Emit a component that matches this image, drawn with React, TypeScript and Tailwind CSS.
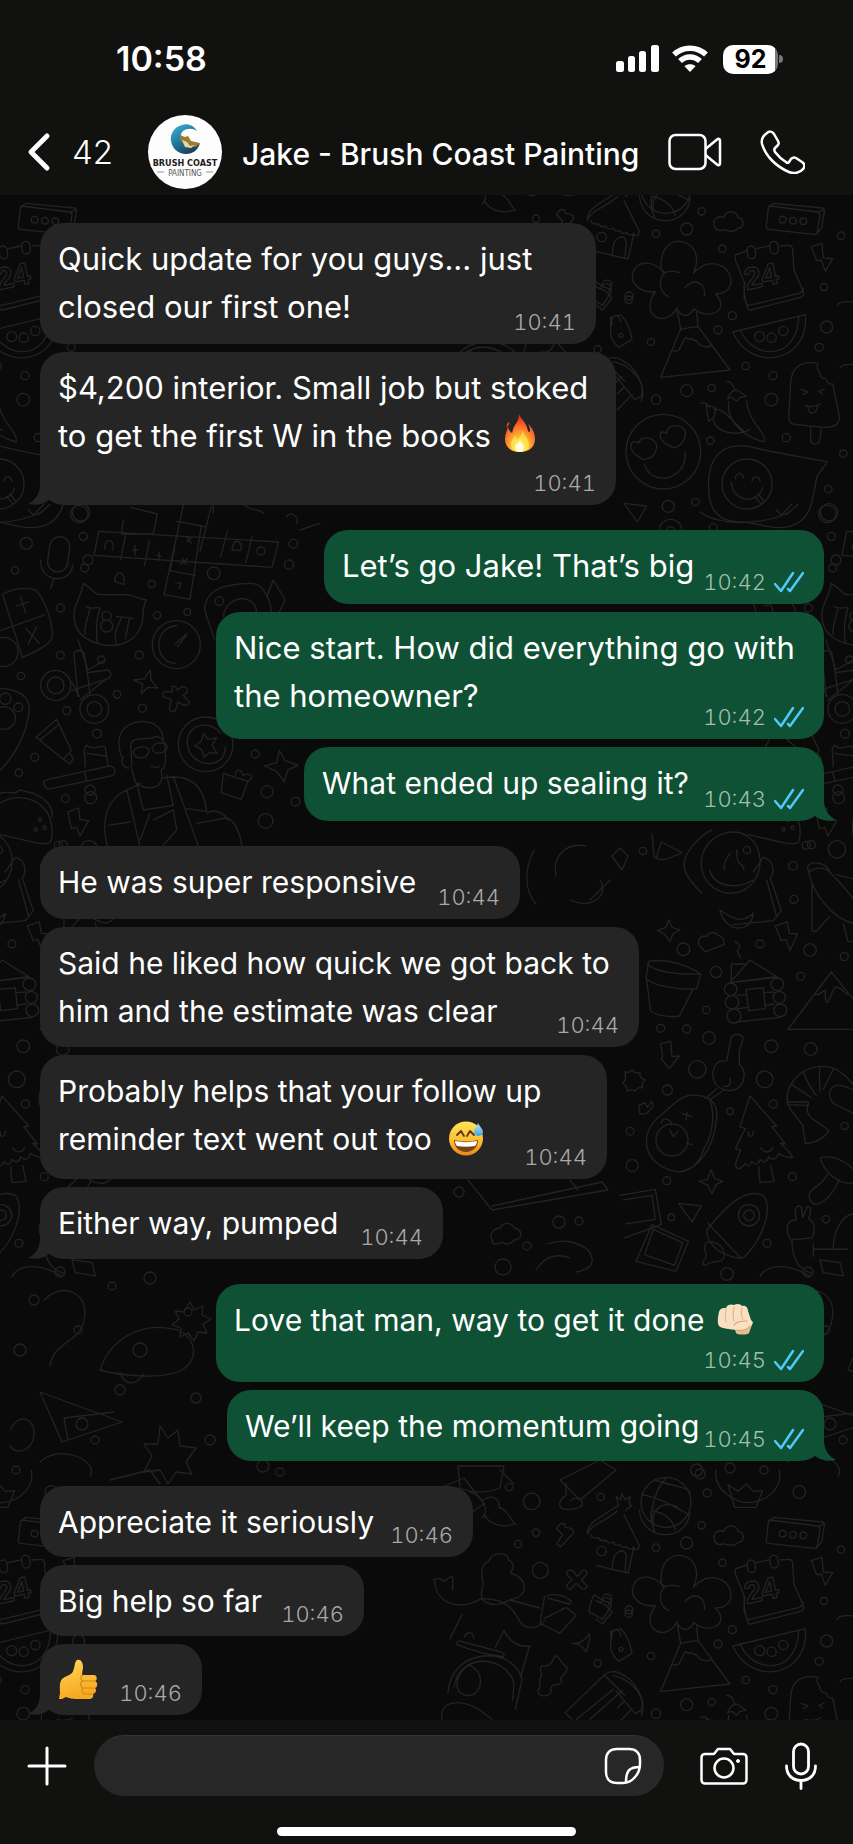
import type { ReactNode } from 'react'
import { clsx } from 'clsx'

type Message = {
  lines: ReactNode[]
  time: string
  size: string
  mine?: boolean
  tail?: boolean
  timeBelow?: boolean
}

function Fire() {
  return (
    <svg viewBox="0 0 32 40" className="ml-1 inline-block h-10 w-8 align-[-6px]" role="img" aria-label="fire">
      <defs>
        <radialGradient id="fire" cx="0.5" cy="0.88" r="0.8">
          <stop offset="0.1" stopColor="#fff56a" />
          <stop offset="0.38" stopColor="#ffb52e" />
          <stop offset="0.7" stopColor="#fb6b2c" />
          <stop offset="1" stopColor="#e2301c" />
        </radialGradient>
      </defs>
      <path fill="url(#fire)" d="M15 1c1 4 8 9 9 17 1 2 2 1 2-1 0-2-1-4-2-6 4 3 7 9 7 15 0 8-6 13-15 13S1 34 1 26c0-5 2-8 3-12 1 3 2 5 4 6 1-3 1-5 3-8 3-4 4-7 4-11Z" />
      <path fill="#ef4a20" d="M5 9c1 2-1 3-2 6-1-2 0-5 2-6Z" />
      <path fill="#ffe94d" d="M18 15c0 6 7 10 7 17 0 4-4 7-9 7s-9-3-9-8c0-4 3-6 4-9 1 2 1 4 2 5 4-3 6-7 5-12Z" opacity="0.75" />
      <path fill="#fffbe0" d="M16 27c1 3 4 4 4 7 0 3-2 5-4 5s-5-2-5-5 4-4 5-7Z" />
    </svg>
  )
}

function SweatSmile() {
  return (
    <svg viewBox="0 0 36 36" className="ml-2 inline-block h-9 w-9 align-[-6px]" role="img" aria-label="grinning face with sweat">
      <defs>
        <linearGradient id="face" x1="0" y1="0" x2="0" y2="1">
          <stop offset="0" stopColor="#ffe45a" />
          <stop offset="0.6" stopColor="#fdbd2c" />
          <stop offset="1" stopColor="#e8851c" />
        </linearGradient>
        <linearGradient id="drop" x1="0" y1="0" x2="0" y2="1">
          <stop offset="0" stopColor="#b9e8fb" />
          <stop offset="1" stopColor="#3fa4e0" />
        </linearGradient>
      </defs>
      <circle cx="18" cy="18.500" r="17" fill="url(#face)" />
      <path d="M9 15l4-4 3 5M19 16l3-5 4 4" fill="none" stroke="#5b3412" strokeWidth="1.800" strokeLinecap="round" strokeLinejoin="round" />
      <path d="M6 20c8 2 16 2 24 0 0 7-5 12-12 12S6 27 6 20Z" fill="#7a4312" />
      <path d="M7 21c7 1.500 15 1.500 22 0 0 2-1 4-2 5-6 1-12 1-18 0-1-1-2-3-2-5Z" fill="#fff" />
      <path d="M30 3c2 4 5 6 5 9 0 2-2 4-4.500 4S26 14 26 12c0-3 3-5 4-9Z" fill="url(#drop)" />
    </svg>
  )
}

function Fist() {
  return (
    <svg viewBox="0 0 37 32" className="ml-1 inline-block h-8 w-[37px] align-[-4px]" role="img" aria-label="oncoming fist">
      <path d="M17 23l2 7c1 2 12 2 13 0l4-11-6-5Z" fill="#e6bd94" />
      <path d="M2 9c1-4 4-4 7-4 1-4 6-4 8-3 3-2 7-1 8 1 4-1 6 2 6 5l3 9c2 2 2 4 0 6-3 4-9 5-14 4-7-1-15-1-18-4-2-3-1-10 0-14Z" fill="#fae0c2" />
      <path d="M9 6c-1 4-1 9 0 13M17 4c-1 5-1 10 0 14M25 5c-1 4-1 8 1 11" fill="none" stroke="#e2b78f" strokeWidth="1.200" strokeLinecap="round" />
      <path d="M17 22c3-4 8-4 13-4M20 27c5 1 10 0 13-4" fill="none" stroke="#d3a57c" strokeWidth="1.200" strokeLinecap="round" />
    </svg>
  )
}

function ThumbsUp() {
  return (
    <svg viewBox="0 0 40 40" className="inline-block size-10 align-[-8px]" role="img" aria-label="thumbs up">
      <defs>
        <linearGradient id="thumb" x1="0" y1="0" x2="0.3" y2="1">
          <stop offset="0" stopColor="#ffd95a" />
          <stop offset="1" stopColor="#f6a821" />
        </linearGradient>
      </defs>
      <path d="M19 1c4-1 6 3 6 7 0 3-1 5-1 8h12c3 0 4 5 1 6 3 1 3 6 0 7 2 2 1 5-2 6 1 3-1 5-4 5H18c-4 0-7-1-10-2l-4 2H1l1-6c0-5-1-10 2-14 3-3 7-3 10-6 3-4 2-11 5-13Z" fill="url(#thumb)" />
      <path d="M25 16c-3 1-3 5 0 6h12M25 22c-3 1-3 6 0 7h11M26 29c-3 1-2 5 0 6h8" fill="none" stroke="#d48a17" strokeWidth="1.200" strokeLinecap="round" />
    </svg>
  )
}

const groups: Message[][] = [
  [
    { lines: ['Quick update for you guys... just', 'closed our first one!'], time: '10:41', size: 'w-[556px] min-h-[121px] text-[31px]' },
    {
      lines: ['$4,200 interior. Small job but stoked', <>to get the first W in the books <Fire /></>],
      time: '10:41',
      size: 'w-[576px] min-h-[153px] text-[31px]',
      tail: true,
      timeBelow: true,
    },
  ],
  [
    { lines: ['Let’s go Jake! That’s big'], time: '10:42', size: 'w-[500px] min-h-[74px] text-[31px]', mine: true },
    { lines: ['Nice start. How did everything go with', 'the homeowner?'], time: '10:42', size: 'w-[608px] min-h-[127px] text-[31px]', mine: true },
    { lines: ['What ended up sealing it?'], time: '10:43', size: 'w-[520px] min-h-[74px] text-[30px]', mine: true, tail: true },
  ],
  [
    { lines: ['He was super responsive'], time: '10:44', size: 'w-[480px] min-h-[73px] text-[30px]' },
    { lines: ['Said he liked how quick we got back to', 'him and the estimate was clear'], time: '10:44', size: 'w-[599px] min-h-[120px] text-[30px]' },
    {
      lines: ['Probably helps that your follow up', <>reminder text went out too <SweatSmile /></>],
      time: '10:44',
      size: 'w-[567px] min-h-[124px] text-[30px]',
    },
    { lines: ['Either way, pumped'], time: '10:44', size: 'w-[403px] min-h-[72px] text-[30px]', tail: true },
  ],
  [
    { lines: [<>Love that man, way to get it done <Fist /></>], time: '10:45', size: 'w-[608px] min-h-[98px] text-[30px]', mine: true, timeBelow: true },
    { lines: ['We’ll keep the momentum going'], time: '10:45', size: 'w-[597px] min-h-[71px] text-[30px]', mine: true, tail: true },
  ],
  [
    { lines: ['Appreciate it seriously'], time: '10:46', size: 'w-[433px] min-h-[71px] text-[30px]' },
    { lines: ['Big help so far'], time: '10:46', size: 'w-[324px] min-h-[71px] text-[30px]' },
    { lines: [<ThumbsUp />], time: '10:46', size: 'w-[162px] min-h-[71px] text-[30px]', tail: true },
  ],
]

function Time({ message }: { message: Message }) {
  return (
    <span className={clsx('flex shrink-0 items-center gap-2 self-end text-[22px] leading-6 font-light tabular-nums', message.mine ? 'text-[#a3bdae]' : 'text-[#a9a9a9]')}>
      <time>{message.time}</time>
      {message.mine && (
        <svg viewBox="0 0 30 24" className="h-6 w-[30px]" fill="none" stroke="#4fc9f7" strokeWidth="2.500" strokeLinecap="round" strokeLinejoin="round" role="img" aria-label="read">
          <path d="M1 14l6 7L19 3M14 19l2 2L29 3" />
        </svg>
      )}
    </span>
  )
}

function Bubble({ message }: { message: Message }) {
  const { lines, size, mine, tail, timeBelow } = message
  const last = lines[lines.length - 1]
  return (
    <li
      className={clsx(
        'relative flex max-w-full flex-col rounded-3xl pt-3 pr-5 pb-[10px] pl-[18px] leading-[48px]',
        mine ? 'self-end bg-[#0e5135]' : 'self-start bg-[#242524]',
        size,
      )}
    >
      {tail && (
        <svg
          viewBox="0 0 28 25"
          className={clsx('absolute bottom-0 h-[25px] w-7', mine ? '-right-3 -scale-x-100 fill-[#0e5135]' : '-left-3 fill-[#242524]')}
        >
          <path d="M12 0v4C12 13 8 20 0 24c8 2 16 0 21-4l6-10Z" />
        </svg>
      )}
      {lines.slice(0, -1).map((line, i) => (
        <p key={i} className="whitespace-nowrap">{line}</p>
      ))}
      {timeBelow ? (
        <>
          <p className="h-12 whitespace-nowrap">{last}</p>
          <div className="flex flex-1 justify-end">
            <Time message={message} />
          </div>
        </>
      ) : (
        <div className="flex flex-1 justify-between">
          <p className="h-12 whitespace-nowrap">{last}</p>
          <Time message={message} />
        </div>
      )}
    </li>
  )
}

const TILE_W = 748
const TILE_H = 1314

function Dots({ at }: { at: number[][] }) {
  return at.map(([cx, cy, r], i) => <circle key={i} cx={cx} cy={cy} r={r} />)
}

// Each sheet is drawn at three times its size, then scaled down into place.
function Doodles() {
  return (
    <g fill="none" stroke="#232321" strokeWidth="4" strokeLinecap="round" strokeLinejoin="round">
      <g transform="translate(580 190) scale(0.3333)">
        <Dots at={[[365, 64, 11], [228, 131, 11], [320, 117, 18], [427, 176, 11], [146, 329, 11], [457, 377, 12], [414, 420, 12], [213, 456, 11], [497, 528, 11], [579, 557, 12], [732, 291, 11], [740, 411, 18], [718, 472, 12], [783, 137, 11], [320, 602, 18], [395, 594, 11], [228, 629, 14], [574, 629, 19], [619, 743, 12], [391, 752, 11], [790, 791, 11], [745, 897, 11], [747, 967, 26], [265, 949, 18], [346, 936, 11], [400, 1013, 12], [272, 1022, 34], [272, 1022, 12]]} />
        <path d="M178 18c10 100 144 95 152 8M214 20c-2 20 2 45 10 62M220 20c40 10 60 30 66 58" />
        <path d="M405 112c-12-24 10-36 26-30 10-24 40-20 42 0 20 2 24 30 0 34-20 16-30 2-46 4-12 4-18 0-22-8Z" />
        <path d="M568 48l145 18q8 2 7 10l-8 50q-2 8-10 7L566 118q-8-2-7-10l6-52q1-8 8-8l8-8 146 14q8 1 6 10l-8 50-16 18M718 66l15-8" />
        <Dots at={[[608, 89, 10], [639, 92, 10], [670, 94, 10]]} />
        <path d="M22 90c10-30 60-40 90-70M132 32l46 92c-2 14-10 16-18 8-8 6-16 4-20-4-10 4-18 2-20-6-12 4-18 0-20-8-14 6-20 2-22-6-12 4-20 0-22-6-14 2-22-2-24-10M50 185l94 22 18-78M97 192c0-60 40-60 42-36l-4 46" />
        <circle cx="65" cy="141" r="14" />
        <path d="M254 248c-90-90-150 60-28 58-50 70 30 110 64 50 20 34 40 20 52 0 50 40 110 0 64-44 80 0 50-110-30-88-20 10-30 18-36 26 50-110-110-140-96-12 2 8 6 10 10 10 14-6 30-6 44 0M254 248c-20 20-16 60 12 72M315 293c30-34 64-10 58 24" />
        <path d="M290 352l12 66c20-4 40-8 52-8l-4-44M302 418l-60 144 208-22-96-130M280 482c24 10 24-30 38-40 6 6 8 10 12 4 8-4 12 12 18 4 10 20 30 24 44 18" />
        <path d="M470 194l32-12M528 176l38-8M600 168l28-2q10 2 10 14l4 60 26 60c6 14 4 18-6 22l-150 38q-8 0-10-10l-10-30 2-40-28-70q-2-14 4-18M494 276c-6 20 0 40 4 60 2 14 10 10 20 8l140-34q10-4 12-14" />
        <rect x="502" y="168" width="24" height="38" rx="12" transform="rotate(-8 514 187)" />
        <rect x="570" y="154" width="24" height="38" rx="12" transform="rotate(-8 582 173)" />
        <text x="500" y="300" transform="rotate(-12 500 300)" className="font-['Liberation_Sans'] text-[92px] font-bold">24</text>
        <path d="M694 170l32-10 4 44 28 2-22 38-12-34-14 2ZM458 426l218-52c14 140-160 180-218 52ZM482 422c40 90 170 90 174-42" />
        <Dots at={[[539, 440, 15], [575, 443, 14], [610, 423, 14]]} />
        <path d="M92 382l30-8c20 20 30 50 34 74l-40 24c-16-14-24-30-24-42ZM96 404c-6-34 24-34 26-8M48 290l30 14 18 20-28 36-20-14M64 294c8-20 36-16 28 8" />
        <circle cx="123" cy="436" r="6" />
        <path d="M100 515c50 10 100 60 84 104l-20 10M108 560l56 68M112 612l20-20M112 660l44-46" />
        <path d="M714 520c-60-10-80 20-82 60l-6 100c0 14 6 22 20 24l90 8c30 0 44-10 42-34l-20-96c-10 2-18-4-20-16-14 0-20-8-18-18-10-8-10-18-6-28ZM692 712v40c6 14 26 12 28-2l4-36M664 598l20 8-14 8M732 598l-16 6 12 8M676 646c14 6 30 4 46-4M684 648c0 34 30 24 28-2" />
        <path d="M440 574c12 0 20 10 24 26M442 626l12-20 16-6 28 18-20 6-8 10-14-12ZM446 634c-8 70 60 110 106 122 10-30-50-60-52-124M362 640c14-4 22 2 26 14M378 646l30 6-6 30-16 12ZM400 690c10 40 70 50 110 28M402 656c40 4 54 40 90 68" />
        <circle cx="250" cy="785" r="112" />
        <path d="M188 808c-60-34-30-66-12-48 6-30 70-16 50 26-6 14-20 22-38 22ZM282 774c-60-24-44-60-22-44 0-34 70-30 54 14-6 16-18 26-32 30ZM194 824c20 66 126 50 122-38" />
        <path d="M742 816c-40-10-170-28-240-48-90-10-120 50-116 130 2 90 60 100 110 98 50 8 90 24 130 14 80-20 70-100 86-152Z" />
        <circle cx="501" cy="882" r="75" />
        <path d="M466 866c2-20 22-20 24-2M516 874c2-18 20-18 24 0M454 876c4 60 76 70 94 18M524 920l20 22M534 912l18 22M588 958l16 18 32-34M618 974l36-30M132 940l68 8-28 48ZM772 346c4-14 30-12 50-10M780 534c4-14 30-12 50-10" />
      </g>
      <g transform="translate(430 156) scale(0.3333)">
        <Dots at={[[237, 51, 11], [305, 94, 25], [512, 81, 11], [318, 188, 11], [264, 222, 11], [331, 301, 24], [597, 420, 12], [503, 580, 11], [708, 97, 75], [832, 69, 12], [1108, 66, 19], [800, 0, 18]]} />
        <path d="M674 30c60 20 100 20 108 40M636 74c60 10 100 40 140 58M670 160c-10-60 60-70 80-40M664 152c0-60 20-100 44-128" />
        <path d="M858 0c-10 60 60 100 100 98 60-4 100-50 90-98M894 44l30 20 26-22 20 22 28-2-20 50H914Z" />
        <path d="M472 192c0-30 20-40 94-86l-8-26 14 10 4-18 10 18 14-10-2 20 6 8-18 14" />
        <path d="M120 66c40 10 60 60 36 78M160 90c30-20 50 0 48 24 16 0 18 14 26 18 8 8 10 22 22 30-40 14-80 0-94-30M380 176c10-20 24-20 26-4 20 0 30 12 22 20l-36 38-12-8 18-28ZM408 40v36c-30 20-20 40 0 42 30 0 60-6 46-26-8-10-24-10-32 0" />
        <path d="M410 306q12-12 22 0l10 14 14-18q14-6 16 8l-18 20 18 18q-4 12-16 8l-18-16-16 18q-14-2-10-14l14-16-16-14ZM492 374l32 20q20 4 20 14l-26 40-40-22q-2-16 14-52ZM518 384c0-20 34-10 26 4l-8 18" />
        <path d="M426 520c20 4 40-10 52-28 4 10-4 40-10 54-8-16-20-26-42-26Z" />
        <path d="M10 330c20-10 30 0 34 4 10-10 16-14 24-14v40M14 330c0 60 60 100 140 56 60 0 90 20 110 60 20 40 60 30 80 6M160 340c-10-40-4-60 16-66 10-30 60-30 60-4 24 14 10 30 6 40 50 10 60 70 0 78-40 24-90 20-88-20ZM344 378l-14 82 60 30 48-54-30-24-66 34M350 378c20-10 60 0 74 16l-6 8-66-18M240 390l90 24M96 434l-36 72M84 512l130 34q12 6 6 14-60-6-140-36ZM104 500c10-20 26-12 28 6M54 668c10-140 200-140 222-40l-20 90M72 650c20-110 160-90 180-10l-4 50M110 590c-50 40-30 100 20 84 30-20 30-70-10-88ZM298 530l-26 90M196 532l26-50c20 40 50 50 80 46M36 748c-10-60 60-60 110-30l40 30" />
        <path d="M376 556c20 10 20 30 34 34 10 20-30 30-14 44-10 20-30 0-34 24 10 20-40 30-38 4 14-20 0-30 8-40 10-10-10-20 4-34 24 4 30-10 40-32Z" />
        <path d="M406 728l120-116q14-10 34-6c60 20 90 90 74 130M406 728l20 20M440 748l110-90M480 748l96-86M524 616l60 60" />
      </g>
      <g transform="translate(0 500) scale(0.3333)">
        <Dots at={[[238, 42, 26], [250, 109, 12], [79, 130, 18], [254, 204, 12], [45, 211, 11], [455, 252, 11], [641, 220, 19], [181, 324, 12], [471, 346, 11], [562, 336, 10], [181, 466, 12], [304, 479, 11], [418, 465, 12], [63, 528, 11], [351, 583, 11], [427, 625, 12], [200, 632, 12], [291, 701, 13], [104, 772, 12], [57, 818, 11], [196, 896, 12], [272, 893, 18], [766, 762, 12], [801, 875, 18], [887, 905, 13], [797, 963, 22], [880, 131, 13], [867, 194, 14], [190, 1034, 12]]} />
        <rect x="146" y="110" width="60" height="106" rx="30" transform="rotate(8 176 163)" />
        <path d="M122 180c-4 70 90 74 96 16M162 236l-10 28" />
        <path d="M296 94l540 32-20 76-534-36ZM376 108l-14 70M448 122l-14 74M604 76l-34 222-78-14 58-268M634 20l-34 134M682 94l-20 76M756 110l-18 78M524 142l-14 70 76 14M530 64l86 16M370 60l-6 42 96 0 12-60-80-20" />
        <path d="M314 148c-2-40 34-30 24 2M398 150h14M405 136v30M470 166l14 4M478 156l-2 26M560 110l14 20M575 112l-14 14M546 174l12 20M562 176l-20 16M696 150c2-40 36-30 26 2ZM532 250c6-8 16 2 6 10v6M344 244c2-40 36-30 28 10Z" />
        <circle cx="783" cy="153" r="12" />
        <path d="M10 282c30-20 80-20 100-10 30 40 50 100 46 140-4 20-60 50-90 60M8 284l60 190M0 392l136-48M50 318l36-12M62 290l14 48M76 384l42 46M110 380l-26 54" />
        <circle cx="10" cy="456" r="44" />
        <path d="M250 250c20 12 30 26 44 34h90c20 4 30 12 56 16-14 20-10 40-12 60-10 60-60 80-110 76-60-10-100-40-96-100 4-30 20-40 28-86ZM258 320c20 10 30 0 42 4-10 30-14 60-8 104M270 324c-4 30-20 50-14 80M350 350c20 0 30 2 50 6M364 354c-14 30-24 50-16 76M388 356l-12 60" />
        <circle cx="320" cy="348" r="14" />
        <circle cx="320" cy="378" r="18" />
        <circle cx="529" cy="434" r="72" />
        <path d="M530 378c-70 0-70 110-4 112M526 432l36-32M532 440l26-32" />
        <path d="M222 462c4-14 28-14 30 0l10 56 60-8c14 4 14 20 2 26l-110 36M222 462l12 126M262 518l8 64M214 544l24 46" />
        <Dots at={[[167, 556, 45], [167, 556, 25], [283, 627, 43], [283, 627, 22], [16, 596, 17], [55, 622, 13], [12, 654, 34]]} />
        <path d="M0 566c50 0 90 20 88 66-10 80-50 140-88 180M400 540l34-4 16-26 4 32 18 22-28-2-20 18 4-28ZM516 560q10-6 16 10l16-10q14 0 14 16l-12 10 18 20q-4 14-20 8l-14-8-8 26q-12 8-18-4l6-30-24-8q-6-14 8-16l20 2ZM108 712l62-54 44 94-24 26ZM120 720l56-46M190 778l20 14 10-16-10-14M256 800c0-40-10-50 4-64 20 20 40-6 56 6l8 54M260 760l56 8M130 846c4-8 10-6 200-48 20 4 20 24 4 30l-180 38q-20 4-24-20ZM254 816l6 24" />
        <path d="M364 770c-20-60 0-100 60-106 50 0 66 30 66 60-10-16-20-16-34-10-40 4-60 0-64 20l4 60M370 770c-10 20 4 34 16 34M392 796l14 50c20 20 70 30 80-10l-2-26c20-10 10-60 10-82M400 756c10-26 60-16 44 4-6 18-40 20-44-4ZM456 744c10-26 60-16 42 6-10 14-40 14-42-6ZM452 798q16 8 28 0M322 1040c-20-80 0-130 40-160 20-10 40-20 60-30M490 834c80-14 120 20 130 100l-60-8M380 868l40 172M324 976l66-10M410 850l20 80 90-14-20-90M520 830l76 210M450 940l-30 80M460 960l60-30 10 60-44 50M590 970l90-16c30 10 40 50 46 86M620 940c30-20 60 10 64 20" />
        <circle cx="617" cy="733" r="82" />
        <path d="M676 740c0 80-120 60-114-20 6-50 70-60 100-20M612 700l12 18 26-4-14 22 16 24-24-2-16 14-8-24-20-10 20-14ZM670 820l74 24-20 54-60-20ZM706 826c0-20 20-20 22 0 20-10 40 6 18 16M794 798l36-10 8-36 18 30 38 14-30 14-12 36-20-30ZM204 936l32-12 4 34 26 4-26 46-10-26-16 4ZM0 910c60-40 160-10 156 90 0 40-16 30-40 30l-116-26M0 880c30-10 40 8 60-10 20 10 40 4 50 16 30 10 50 40 46 64" />
        <Dots at={[[120, 959, 5], [107, 988, 5], [134, 983, 5]]} />
        <path d="M614 330c0-60 60-80 140-80 40 0 60 60 60 90M614 330l30 90M670 350c10-70 100-70 100-10M800 290l20-50 36 60-20 40" />
        <circle cx="658" cy="303" r="13" />
        <path d="M720 0c30 40 50 20 70 40M640 0v40M860 50c10-20 40 0 30 20M900 90l60-20" />
      </g>
      <g transform="translate(620 830) scale(0.3333)">
        <Dots at={[[69, 63, 11], [559, 46, 12], [651, 58, 26], [519, 108, 13], [522, 208, 12], [190, 358, 19], [420, 342, 12], [570, 360, 19], [673, 380, 12], [288, 426, 17], [542, 439, 12], [259, 540, 11], [122, 595, 12], [200, 597, 12], [267, 624, 19], [454, 649, 19], [572, 657, 19], [232, 718, 26], [434, 748, 25], [142, 780, 15], [330, 844, 10], [460, 822, 12], [30, 904, 12], [37, 1007, 18], [674, 888, 11], [140, 1052, 12], [517, 1040, 12], [154, 1162, 10], [618, 1168, 11], [441, 1240, 12], [321, 1332, 19], [381, 60, 11]]} />
        <path d="M96 10l6 68c20 20 40 10 84-10l-62-32-16 50M246 190c-60-60-70-90-30-140 30-40 60-50 60-50M320 8c-80 20-100 110-46 160 60 50 150 10 146-80-4-60-50-90-100-80ZM270 120c10 50 80 60 130 30M400 126l30-44c40 10 30 60 20 60l34 100-24 30-120 12M300 240c10 60 90 80 100 10-30 30-60 20-100-10ZM440 150l30 110M330 70c-20 30-20 40-16 50M350 60c0 60 20 30 22 60" />
        <path d="M562 110c10-20 60-14 70 20 60 60 90 100 90 140l-20 10c-60-10-110-80-126-120ZM576 160v140q10 10 20-4l32-36M670 280l14 54 20 2M648 134l60 14M564 130c20-20 50-20 66-4" />
        <path d="M112 302l26-10 8-22 10 22 24 8-20 10-10 24-16-22ZM236 344c-4-20 10-30 24-24 10-20 30-12 34-4 20 2 18 20 18 28l-56 22ZM466 288l36-12 6 34 24 2-22 50-12-34-14 4ZM346 334l14 14-8 16 10 20" />
        <path d="M86 394c60-10 120 14 156 38l-12 44c-50 6-130-10-152-30ZM82 400c20 30 110 34 158 32M80 450l12 94c20 14 60 18 86 14l40-78" />
        <path d="M330 458l60-68 80 50ZM334 450v-48h40M332 458l140-16M378 478l52-4 6 62-50 6ZM350 496l28-2M352 536l34-4M432 488l30-2M436 526l26-4M350 576l130-14" />
        <Dots at={[[332, 478, 19], [336, 517, 20], [342, 558, 21], [472, 463, 19], [478, 502, 18], [481, 541, 19]]} />
        <path d="M504 598l130-172 64 80M504 598h200M586 494c20 0 30-20 30-10 0 20 0 40 8 32 10-20 20-50 26-44 20 0 20 20 34 20" />
        <path d="M122 642l30-8 4 46 22-2-30 38-24-30 4-6ZM14 724q14 8 22-4 8 12 24 8-4 16 16 22-14 8-8 24-16-4-22 10-10-10-24 0 2-14-14-24 14-10 6-36ZM56 826l20-8 6 14 14-18 4 16-20 20-20 2Z" />
        <path d="M320 692l14-70c6-14 34-10 36 4l-12 36v40c30 30 10 80-30 80-60-4-60-70-30-88ZM290 776l-34 30M312 780l-44 30M330 744c4 20-6 30-20 24" />
        <path d="M206 796c60-4 90 20 84 70-10 100-60 150-110 160-100-10-130-100-70-160 40-30 60-60 96-70ZM270 810c20 60 0 120-20 150-10 40-40 60-60 64M124 880c0-20 30-14 30 4M150 900l10 20 14-16M186 850l30 10M202 846l-4 24M200 940l16 4" />
        <circle cx="156" cy="930" r="48" />
        <path d="M390 798l-30 92 16 6-30 60 16 4c-8 20-20 50-14 50 10 14 20 0 28-10 4 10 14 10 20-6 10 14 20 10 24-6 14 14 24 6 26-8 14 16 26 4 30-10 14 10 30 14 42 12-10-20-24-28-36-42l14 2-40-52 14-2ZM416 1010l4 48 42-4-10-48M384 904c0 20 16 20 16 0M422 954c10 16 30 16 36-2" />
        <path d="M502 820c-10-80 80-130 140-104 30 10 50 40 60 50M566 816c-10 30 0 40 10 50l50 34c0 10-30 40-70 40l-8-54c-20-30-44-50-46-70ZM502 824l64 2M516 764l60 40M550 724c10 30 20 50 40 74M600 710c-4 30 0 50 0 76M640 718l-30 60M700 780c-80-40-80 20-60 40l60 30" />
        <path d="M600 984c40-14 100 20 120 60-30 40-100 0-120-60ZM622 1034c-20 40-60 40-54 70 14 40 60 10 90-54" />
        <path d="M238 1054l24-6 12-28 10 26 24 8-20 10-12 28-12-26ZM176 1120l68 8-28 48ZM0 1096l106-18 18 106-110 40M10 1110l86-14 10 72-90 14M96 1184l110 50-38 90-120-30ZM100 1198l88 40-24 68-90-32Z" />
        <path d="M430 1096c30 40 0 130-60 188-50 0-110-30-110-84 50-60 110-130 170-104ZM264 1180l100 106M256 1246c-10 20 10 20 0 40-10 10-10 20 0 20 30-20 60 0 56-36-6-40-60-40-56-24Z" />
        <Dots at={[[387, 1156, 32], [387, 1156, 16]]} />
        <path d="M512 1230c-20-40-10-60 18-60-10-30 0-50 14-38l4 30 14-32c10 0 14 10 4 36 20 10 20 40 10 58ZM516 1230c0 60 20 90 60 100M580 1240v40M582 1258h100M640 1256c0-60 30-100 60-104M420 1340c20-40 90-40 150 0M600 1290l60 8 10 40-60-10Z" />
      </g>
      <g strokeWidth="1.300">
        <Dots at={[[532, 1104, 4], [459, 1192, 5], [559, 1222, 6], [527, 1246, 4], [503, 1267, 8], [579, 1221, 4], [120, 1390, 5], [34, 1300, 5], [78, 1330, 4], [188, 1312, 4], [210, 1440, 5], [95, 1440, 4], [140, 1350, 7], [830, 1424, 6], [280, 1472, 4], [700, 1474, 5], [730, 1468, 5], [263, 1466, 6], [836, 560, 5], [838, 790, 5], [20, 1350, 6], [60, 1272, 5], [112, 1286, 4], [150, 1278, 6], [196, 1398, 5], [16, 1470, 4]]} />
        <path d="M468 1180l24 30 116-20-6-8-110 24M570 1180l8 10M492 1240c-4-8 4-12 8-12 4-8 14-4 14 0 10 2 8 12 0 12-4 6-10 4-12 2-6 4-10 2-10-2ZM548 1244c14-6 30-2 40 6 10 14 0 20-12 22M536 1270c10-16 24-16 34-12" />
        <path d="M190 1302l4 8 9-4-1 9 9 4-8 5 4 9-9-1-4 9-6-8-8 4 1-9-9-3 7-6-4-8 9 1ZM40 1392l22 50 60-20ZM68 1440l-4-22 50-6M160 1426l8 12 10-8 2 16 16 2-10 14 6 12-16-2-8 12-8-14-16 2 8-16-8-12h14Z" />
        <path d="M44 1300c20-20 46-6 40 20-4 24-30 20-34 46M100 1370c10-30 40-50 78-40 20 10 20 30 4 40-20 10-60 6-82 0ZM120 1372c4 14 16 14 24 2M10 1430c10-20 26-10 24 6-2 14-16 20-24 10M440 1488l24-10 20 26-30 20M500 1470l14 14M458 1466h46l-4 22q-20 8-40 0ZM560 1480l40-20 16 10-36 30Z" />
        <path d="M534 850c-10 20-10 40 2 54M556 876c-4-20 10-34 30-30M570 900c20 10 40-4 30-20M612 856l8-8 8 8-6 14ZM590 900l20-20M40 1462c20-20 60 0 50 14M110 1480l40-10 10 14" />
        <path d="M630 540c10-14 40-10 50 0M700 512c20 14 60 14 90 0M826 640l10 30 17-10M828 700l25-20" />
      </g>
    </g>
  )
}

function Wallpaper() {
  return (
    <svg className="absolute inset-0 size-full" aria-hidden="true">
      <defs>
        <g id="doodles">
          <Doodles />
        </g>
      </defs>
      <g transform="translate(0 -195)">
        {[-TILE_W, 0, TILE_W].map((x) =>
          [0, TILE_H].map((y) => <use key={`${x} ${y}`} href="#doodles" x={x} y={y} />),
        )}
      </g>
    </svg>
  )
}

function StatusBar() {
  return (
    <div className="flex items-center justify-between pt-9 pr-[70px] pl-[116px]">
      <span className="text-[34px] leading-[46px] font-semibold">10:58</span>
      <div className="flex items-center">
        <svg viewBox="0 0 44 28" className="mr-3 h-7 w-11 fill-white">
          <rect x="0" y="16" width="8" height="11" rx="2.500" />
          <rect x="12" y="11" width="7" height="16" rx="2.500" />
          <rect x="23" y="6" width="7" height="21" rx="2.500" />
          <rect x="35" y="0" width="8" height="27" rx="2.500" />
        </svg>
        <svg viewBox="0 0 36 28" className="mr-[15px] h-7 w-9" fill="none" stroke="#fff" strokeWidth="5.500">
          <path d="M2 9.500c9-8.500 23-8.500 32 0M8 16c6-5.500 14-5.500 20 0" />
          <path d="M18 27l-5.500-5.800c3-2.600 8-2.600 11 0Z" fill="#fff" stroke="none" />
        </svg>
        <div className="h-[29px] w-[55px] rounded-[10px] bg-linear-to-r from-white from-94% to-[#777] to-94% text-center text-[25px] leading-[29px] font-bold text-black">92</div>
        <span className="ml-px h-2 w-1 rounded-r-full bg-[#777]" />
      </div>
    </div>
  )
}

function Avatar() {
  return (
    <svg viewBox="0 0 74 74" className="size-[74px]" role="img" aria-label="Brush Coast Painting logo">
      <defs>
        <linearGradient id="wave" x1="0" y1="0" x2="0.6" y2="1">
          <stop offset="0" stopColor="#45b3cf" />
          <stop offset="0.5" stopColor="#1f7fa6" />
          <stop offset="1" stopColor="#1b3f5c" />
        </linearGradient>
      </defs>
      <circle cx="37" cy="37" r="37" fill="#fdfdfd" />
      <path d="M49 16c-3-5-9-8-15-6-8 2-12 9-11 16s7 13 15 13c7 0 12-4 14-11-5 3-10 4-14 1-5-3-7-9-3-13 4-3 10-3 14 0Z" fill="url(#wave)" />
      <path d="M32 20l5 2 3-1 3 5 9 2-4 4-7-1-5-2-4-4Z" fill="#9a7d33" />
      <path d="M34 25l5 2 3 4 5-1-4 3-6-1Z" fill="#e9d79c" />
      <text x="37" y="51" textAnchor="middle" className="fill-[#1c1c1c] font-['DejaVu_Sans_Condensed',sans-serif] text-[9px] font-bold">BRUSH COAST</text>
      <text x="37" y="61" textAnchor="middle" className="fill-[#555] font-['DejaVu_Sans_Condensed',sans-serif] text-[8px]">PAINTING</text>
      <path d="M9 57h7M58 57h7" stroke="#999" />
    </svg>
  )
}

function ChatHeader() {
  return (
    <div className="flex items-center pt-[33px] pr-12 pb-[6px] pl-[27px]">
      <button className="flex items-center" aria-label="Back, 42 unread chats">
        <svg viewBox="0 0 24 40" className="mr-[21px] h-10 w-6" fill="none" stroke="#fff" strokeWidth="5" strokeLinecap="round" strokeLinejoin="round">
          <path d="M20 4 4 20l16 16" />
        </svg>
        <span className="w-19 text-left text-[33px] leading-10 font-light">42</span>
      </button>
      <Avatar />
      <h1 className="ml-5 flex-1 pt-1 whitespace-nowrap text-[30px] leading-10 font-medium">Jake - Brush Coast Painting</h1>
      <button aria-label="Video call">
        <svg viewBox="0 0 54 38" className="h-[38px] w-[54px]" fill="none" stroke="#fff" strokeWidth="2.500" strokeLinejoin="round">
          <rect x="1.500" y="2" width="36" height="34" rx="6" />
          <path d="M37.500 16 49 6.500c1.500-1.200 3-.5 3 1v23c0 1.500-1.500 2.200-3 1L37.500 22" />
        </svg>
      </button>
      <button className="ml-[38px]" aria-label="Voice call">
        <svg viewBox="0 0 45 44" className="h-11 w-[45px]" fill="none" stroke="#fff" strokeWidth="2.500" strokeLinejoin="round">
          <path d="M7 3c2-2 5-2 7 1l4 7c1 2 1 3 0 4l-3 3c-1 1-1 2 0 4 3 4 6 7 11 10 1 1 2 1 3 0l2-3c1-1 3-2 5-1l6 4c3 2 3 5 1 7-3 4-9 5-14 3C17 37 6 27 2 14 1 9 4 5 7 3Z" />
        </svg>
      </button>
    </div>
  )
}

function Composer() {
  return (
    <footer className="flex flex-col items-center bg-[#111110] pt-[15px] pb-2">
      <form className="flex w-full items-center pr-9 pl-[27px]" onSubmit={(e) => e.preventDefault()}>
        <button type="button" aria-label="Attach">
          <svg viewBox="0 0 40 40" className="size-10" stroke="#fff" strokeWidth="3" strokeLinecap="round">
            <path d="M20 2v36M2 20h36" />
          </svg>
        </button>
        <div className="ml-[27px] flex h-[61px] flex-1 items-center rounded-full border-t border-[#333433] bg-[#262726] pr-[22px] pl-6">
          <input type="text" aria-label="Message" className="min-w-0 flex-1 bg-transparent text-[31px] outline-none" />
          <button type="button" aria-label="Stickers">
            <svg viewBox="0 0 38 38" className="size-[38px]" fill="none" stroke="#fff" strokeWidth="2.500" strokeLinejoin="round">
              <path d="M13 2h12c7 0 11 4 11 11v4c0 10-8 19-17 19h-6C6 36 2 32 2 25V13C2 6 6 2 13 2Z" />
              <path d="M36 20c-10 0-14 3-14 15" />
            </svg>
          </button>
        </div>
        <button type="button" className="ml-9" aria-label="Camera">
          <svg viewBox="0 0 48 38" className="h-[38px] w-12" fill="none" stroke="#fff" strokeWidth="2.500" strokeLinejoin="round">
            <path d="M5 7h9l4-5h12l4 5h9c2 0 3.500 1.500 3.500 3.500V33c0 2-1.500 3.500-3.500 3.500H5c-2 0-3.500-1.500-3.500-3.500V10.500C1.500 8.500 3 7 5 7Z" />
            <circle cx="24" cy="21" r="9.500" />
            <circle cx="38" cy="14" r="1.500" fill="#fff" strokeWidth="1" />
          </svg>
        </button>
        <button type="button" className="ml-[37px]" aria-label="Record voice message">
          <svg viewBox="0 0 32 48" className="h-12 w-8" fill="none" stroke="#fff" strokeWidth="2.800" strokeLinecap="round">
            <rect x="8.500" y="2" width="15" height="30" rx="7.500" />
            <path d="M1.500 24c0 9 6 14.500 14.500 14.500S30.500 33 30.500 24M16 39v7.500" />
          </svg>
        </button>
      </form>
      <div className="mt-[31px] h-[9px] w-[299px] rounded-full bg-white" />
    </footer>
  )
}

export default function App() {
  return (
    <div className="flex min-h-screen flex-col overflow-hidden bg-[#0a0a0a] font-['Inter','Liberation_Sans',sans-serif] text-white">
      <header className="bg-[#111110]">
        <StatusBar />
        <ChatHeader />
      </header>
      <main className="relative flex-1">
        <Wallpaper />
        <div className="relative flex flex-col gap-[25px] pt-7 pr-[29px] pb-1 pl-10">
          {groups.map((messages, i) => (
            <ul key={i} className="flex flex-col gap-2">
              {messages.map((message, j) => (
                <Bubble key={j} message={message} />
              ))}
            </ul>
          ))}
        </div>
      </main>
      <Composer />
    </div>
  )
}
